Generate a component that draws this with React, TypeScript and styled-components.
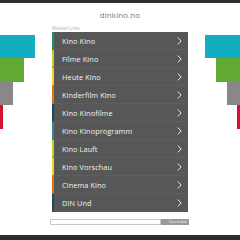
import React from 'react';
import styled, { createGlobalStyle } from 'styled-components';

const links = [
  { label: 'Kino Kino', color: '#2a8c6e' },
  { label: 'Filme Kino', color: '#b9cf2a' },
  { label: 'Heute Kino', color: '#f1d21f' },
  { label: 'Kinderfilm Kino', color: '#e2741e' },
  { label: 'Kino Kinofilme', color: '#1b4a66' },
  { label: 'Kino Kinoprogramm', color: '#2a8c8c' },
  { label: 'Kino Lauft', color: '#b9cf2a' },
  { label: 'Kino Vorschau', color: '#f1d21f' },
  { label: 'Cinema Kino', color: '#e2741e' },
  { label: 'DIN Und', color: '#1b4a66' },
];

const bars = [
  { width: 35, height: 23, color: '#12aebf' },
  { width: 24, height: 24, color: '#62a832' },
  { width: 13, height: 23, color: '#888888' },
  { width: 3, height: 24, color: '#d4102c' },
];

export default function App() {
  return (
    <>
      <GlobalStyle />
      <Page>
        <TopBar />
        <Title>dinkino.no</Title>
        <Main>
          <Side $align="flex-start">
            {bars.map((b) => (
              <Bar key={b.color} $width={b.width} $height={b.height} $color={b.color} />
            ))}
          </Side>
          <Center>
            <Caption>Related Links</Caption>
            <List>
              {links.map((l) => (
                <Row key={l.label} $accent={l.color}>
                  <RowLabel>{l.label}</RowLabel>
                  <Chevron width="5" height="8" viewBox="0 0 5 8">
                    <path d="M0.8 0.6 L4.2 4 L0.8 7.4" fill="none" stroke="#eee" strokeWidth="1" />
                  </Chevron>
                </Row>
              ))}
            </List>
            <Search>
              <SearchInput />
              <SearchButton>Search Ads</SearchButton>
            </Search>
          </Center>
          <Side $align="flex-end">
            {bars.map((b) => (
              <Bar key={b.color} $width={b.width} $height={b.height} $color={b.color} />
            ))}
          </Side>
        </Main>
        <BottomBar />
      </Page>
    </>
  );
}

const GlobalStyle = createGlobalStyle`
  html, body {
    margin: 0;
    padding: 0;
    background: #fff;
  }
  body {
    font-family: 'Open Sans', 'Noto Sans', sans-serif;
  }
`;

const Page = styled.div`
  width: 240px;
  height: 240px;
  display: flex;
  flex-direction: column;
  overflow: hidden;
`;

const TopBar = styled.div`
  height: 3px;
  background: #2e2e2e;
`;

const Title = styled.div`
  height: 21px;
  display: flex;
  align-items: center;
  justify-content: center;
  padding-top: 2px;
  box-sizing: border-box;
  font-size: 8px;
  color: #7a7a7a;
  letter-spacing: 0.1px;
`;

const Main = styled.div`
  flex: 1;
  display: grid;
  grid-template-columns: 52px 138px 50px;
`;

const Side = styled.div<{ $align: string }>`
  display: flex;
  flex-direction: column;
  align-items: ${(p) => p.$align};
  padding-top: 11px;
`;

const Bar = styled.div<{ $width: number; $height: number; $color: string }>`
  width: ${(p) => p.$width}px;
  height: ${(p) => p.$height}px;
  background: ${(p) => p.$color};
`;

const Center = styled.div`
  display: flex;
  flex-direction: column;
`;

const Caption = styled.div`
  height: 8px;
  font-size: 4.5px;
  line-height: 8px;
  color: #b0b0b0;
`;

const List = styled.div`
  width: 136px;
  background: #575757;
`;

const Row = styled.div<{ $accent: string }>`
  height: 18px;
  display: flex;
  align-items: center;
  justify-content: space-between;
  box-sizing: border-box;
  padding: 0 6px 0 8px;
  border-left: 2px solid ${(p) => p.$accent};
  border-bottom: 1px solid #5e5e5e;
  &:last-child {
    border-bottom: none;
  }
`;

const RowLabel = styled.span`
  font-size: 7.3px;
  color: #f2f2f2;
  letter-spacing: 0.1px;
`;

const Chevron = styled.svg`
  display: block;
`;

const Search = styled.div`
  display: flex;
  margin-top: 7px;
  margin-left: -2px;
  height: 6px;
`;

const SearchInput = styled.div`
  width: 111px;
  height: 6px;
  box-sizing: border-box;
  border: 1px solid #c8c8c8;
  background: #fff;
`;

const SearchButton = styled.div`
  width: 28px;
  height: 6px;
  background: #9a9a9a;
  color: #eee;
  font-size: 3.5px;
  line-height: 6px;
  text-align: right;
  padding-right: 2px;
  box-sizing: border-box;
`;

const BottomBar = styled.div`
  height: 5px;
  background: #2e2e2e;
`;
